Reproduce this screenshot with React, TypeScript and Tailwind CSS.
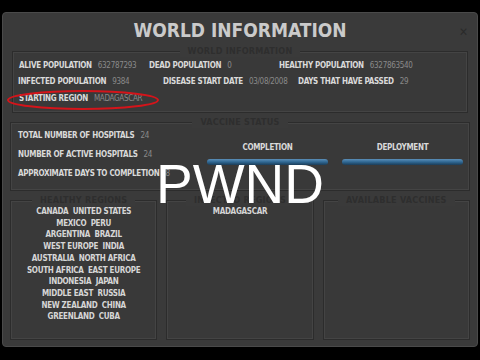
import { FC, ReactNode } from 'react';

const font = "'Liberation Sans Narrow','DejaVu Sans Condensed','Liberation Sans',sans-serif";

const Stat: FC<{ label: string; value: string; className?: string }> = ({ label, value, className }) => (
  <div className={`flex items-center gap-[6px] shrink-0 ${className ?? ''}`}>
    <span className="font-bold text-[#dadada]">{label}</span>
    <span className="text-[#8a8a8a]">{value}</span>
  </div>
);

const GroupBox: FC<{ title: string; className?: string; children?: ReactNode }> = ({ title, className, children }) => (
  <div className={`relative border border-[#2c2c2c] shadow-[inset_0_0_0_1px_#444] bg-[#393939] ${className ?? ''}`}>
    <div className="absolute left-0 right-0 -top-[6px] flex justify-center">
      <span className="px-2 bg-[#3a3a3a] text-[9px] leading-[11px] font-bold text-[#2e2e2e] tracking-wide">{title}</span>
    </div>
    {children}
  </div>
);

const regions = [
  'CANADA  UNITED STATES',
  'MEXICO  PERU',
  'ARGENTINA  BRAZIL',
  'WEST EUROPE  INDIA',
  'AUSTRALIA  NORTH AFRICA',
  'SOUTH AFRICA  EAST EUROPE',
  'INDONESIA  JAPAN',
  'MIDDLE EAST  RUSSIA',
  'NEW ZEALAND  CHINA',
  'GREENLAND  CUBA',
];

const Bar: FC = () => (
  <div className="h-[6px] rounded-[3px] bg-gradient-to-b from-[#5b8fb8] via-[#2f6792] to-[#1b3d58]" />
);

export default function App() {
  return (
    <div className="w-[480px] h-[360px] bg-black pt-[12px] px-[2px] overflow-hidden" style={{ fontFamily: font }}>
      <div className="relative h-[335px] rounded-[4px] border border-[#4a4a4a] bg-[#3a3a3a] px-[7px]">
        <div className="flex justify-center h-[38px] pt-[6px]">
          <h1 className="text-[19px] leading-[22px] font-bold text-[#cacaca]">WORLD INFORMATION</h1>
        </div>
        <span className="absolute right-[9px] top-[10px] text-[12px] text-[#2a2a2a] font-bold">✕</span>

        <GroupBox title="WORLD INFORMATION" className="h-[62px] mx-[2px] text-[8px] leading-[10px] tracking-[-0.3px]">
          <div className="flex pt-[9px] pl-[6px]">
            <Stat label="ALIVE POPULATION" value="632787293" className="w-[130px]" />
            <Stat label="DEAD POPULATION" value="0" className="w-[130px]" />
            <Stat label="HEALTHY POPULATION" value="6327863540" />
          </div>
          <div className="flex pt-[6px] pl-[5px]">
            <Stat label="INFECTED POPULATION" value="9384" className="w-[145px]" />
            <Stat label="DISEASE START DATE" value="03/08/2008" className="w-[135px]" />
            <Stat label="DAYS THAT HAVE PASSED" value="29" />
          </div>
          <div className="flex pt-[7px] pl-[6px]">
            <Stat label="STARTING REGION" value="MADAGASCAR" />
          </div>
        </GroupBox>

        <GroupBox title="VACCINE STATUS" className="mt-[9px] h-[69px] text-[8px] leading-[10px] tracking-[-0.3px] flex">
          <div className="flex flex-col pt-[8px] pl-[7px] gap-[9px] w-[196px]">
            <Stat label="TOTAL NUMBER OF HOSPITALS" value="24" />
            <Stat label="NUMBER OF ACTIVE HOSPITALS" value="24" />
            <Stat label="APPROXIMATE DAYS TO COMPLETION" value="8" />
          </div>
          <div className="flex flex-1 gap-[14px] pt-[20px] pr-[6px]">
            <div className="flex-1 flex flex-col gap-[6px]">
              <span className="text-center font-bold text-[#dadada]">COMPLETION</span>
              <Bar />
            </div>
            <div className="flex-1 flex flex-col gap-[6px]">
              <span className="text-center font-bold text-[#dadada]">DEPLOYMENT</span>
              <Bar />
            </div>
          </div>
        </GroupBox>

        <div className="mt-[9px] grid grid-cols-3 gap-[9px] h-[140px]">
          <GroupBox title="HEALTHY REGIONS" className="h-full">
            <div className="flex flex-col items-center pt-[5px] text-[8px] tracking-[-0.3px] leading-[11.7px] font-bold text-[#d6d6d6] whitespace-pre">
              {regions.map((r) => (
                <span key={r}>{r}</span>
              ))}
            </div>
          </GroupBox>
          <GroupBox title="INFECTED REGIONS" className="h-full">
            <div className="flex flex-col items-center pt-[5px] text-[8px] tracking-[-0.3px] leading-[11.7px] font-bold text-[#d6d6d6]">
              <span>MADAGASCAR</span>
            </div>
          </GroupBox>
          <GroupBox title="AVAILABLE VACCINES" className="h-full" />
        </div>

        <svg className="absolute left-[3px] top-[76px]" width="155" height="22" viewBox="0 0 155 22">
          <ellipse cx="77" cy="11" rx="75" ry="9" fill="none" stroke="#d4141a" strokeWidth="2" />
        </svg>

        <div className="absolute left-0 right-0 top-[141px] flex justify-center pointer-events-none">
          <span className="text-[55px] leading-[60px] text-white" style={{ fontFamily: "'Liberation Sans',Arial,sans-serif" }}>PWND</span>
        </div>
      </div>
    </div>
  );
}
